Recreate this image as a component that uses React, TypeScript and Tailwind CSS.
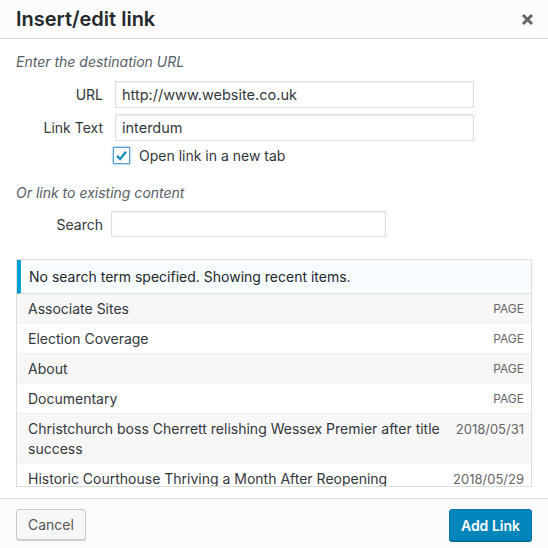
import React from 'react'

type Item = { title: string; info: string; page?: boolean }

const items: Item[] = [
  { title: 'Associate Sites', info: 'PAGE', page: true },
  { title: 'Election Coverage', info: 'PAGE', page: true },
  { title: 'About', info: 'PAGE', page: true },
  { title: 'Documentary', info: 'PAGE', page: true },
  { title: 'Christchurch boss Cherrett relishing Wessex Premier after title success', info: '2018/05/31' },
  { title: 'Historic Courthouse Thriving a Month After Reopening', info: '2018/05/29' },
]

function CloseIcon() {
  return (
    <svg width="13" height="13" viewBox="0 0 13 13" className="text-[#666]">
      <path d="M2 2 L11 11 M11 2 L2 11" stroke="currentColor" strokeWidth="3" strokeLinecap="butt" />
    </svg>
  )
}

function Field({ label, value }: { label: string; value: string }) {
  return (
    <div className="flex items-center">
      <label className="w-[87px] text-right text-[14px] text-[#32373c]">{label}</label>
      <div className="ml-3 w-[359px] h-[27px] border border-[#ddd] shadow-[inset_0_1px_2px_rgba(0,0,0,0.07)] px-[6px] flex items-center text-[14.5px] text-[#32373c]">
        {value}
      </div>
    </div>
  )
}

export default function App() {
  return (
    <div className="w-[548px] h-[548px] bg-white flex flex-col overflow-hidden text-[#32373c]" style={{ fontFamily: 'Inter, "Noto Sans", sans-serif' }}>
      {/* header */}
      <div className="h-[39px] shrink-0 bg-[#fcfcfc] border-b border-[#ddd] flex items-center justify-between pl-4 pr-[14px]">
        <h1 className="text-[20px] font-semibold text-[#23282d] leading-none pb-[1px]">Insert/edit link</h1>
        <CloseIcon />
      </div>

      {/* body */}
      <div className="flex-1 min-h-0 px-4 pt-[13px]">
        <p className="italic text-[14px] leading-5 text-[#555d66]">Enter the destination URL</p>
        <div className="mt-[9px] flex flex-col gap-[6px]">
          <Field label="URL" value="http://www.website.co.uk" />
          <Field label="Link Text" value="interdum" />
        </div>
        <div className="mt-[6px] ml-[97px] flex items-center h-[17px]">
          <div className="w-[17px] h-[17px] border border-[#5b9dd9] shadow-[0_0_2px_rgba(30,140,190,0.8)] bg-white flex items-center justify-center">
            <svg width="13" height="13" viewBox="0 0 13 13">
              <path d="M2 6.8 L5.2 10 L11 2.8" fill="none" stroke="#1e8cbe" strokeWidth="2.4" />
            </svg>
          </div>
          <span className="ml-[9px] text-[14px] text-[#32373c]">Open link in a new tab</span>
        </div>

        <p className="mt-[19px] italic text-[14px] leading-5 text-[#555d66]">Or link to existing content</p>
        <div className="mt-[8px] flex items-center">
          <label className="w-[87px] text-right text-[14px] text-[#32373c]">Search</label>
          <div className="ml-2 w-[275px] h-[26px] border border-[#ddd] shadow-[inset_0_1px_2px_rgba(0,0,0,0.07)]" />
        </div>

        {/* results */}
        <div className="mt-[22px] h-[228px] border border-[#ddd] overflow-hidden">
          <div className="h-[34px] bg-[#f7fcfe] border-l-4 border-[#00a0d2] border-b border-b-[#ddd] flex items-center pl-[8px] text-[14px] text-[#23282d]">
            No search term specified. Showing recent items.
          </div>
          <ul>
            {items.map((it, i) => (
              <li
                key={i}
                className={`flex justify-between items-start gap-4 border-b border-[#f1f1f1] pl-[11px] pr-[7px] pt-[5px] pb-[4px] ${i % 2 === 0 ? 'bg-[#f7f7f7]' : 'bg-white'}`}
              >
                <span className="text-[14px] leading-5 text-[#32373c]">{it.title}</span>
                <span className={`shrink-0 text-[#666] leading-5 ${it.page ? 'text-[12px]' : 'text-[13px]'}`}>{it.info}</span>
              </li>
            ))}
          </ul>
        </div>
      </div>

      {/* footer */}
      <div className="h-[50px] shrink-0 bg-[#fcfcfc] border-t border-[#ddd] flex items-start justify-between px-4 pt-[10px]">
        <button className="h-[31px] px-[11px] rounded-[3px] border border-[#ccc] bg-[#f7f7f7] shadow-[0_1px_0_#ccc] text-[14px] text-[#555]">
          Cancel
        </button>
        <button className="h-[32px] px-[11px] rounded-[3px] border border-[#0073aa] bg-[#0085ba] shadow-[0_1px_0_#006799] text-[14px] font-semibold text-white">
          Add Link
        </button>
      </div>
    </div>
  )
}
